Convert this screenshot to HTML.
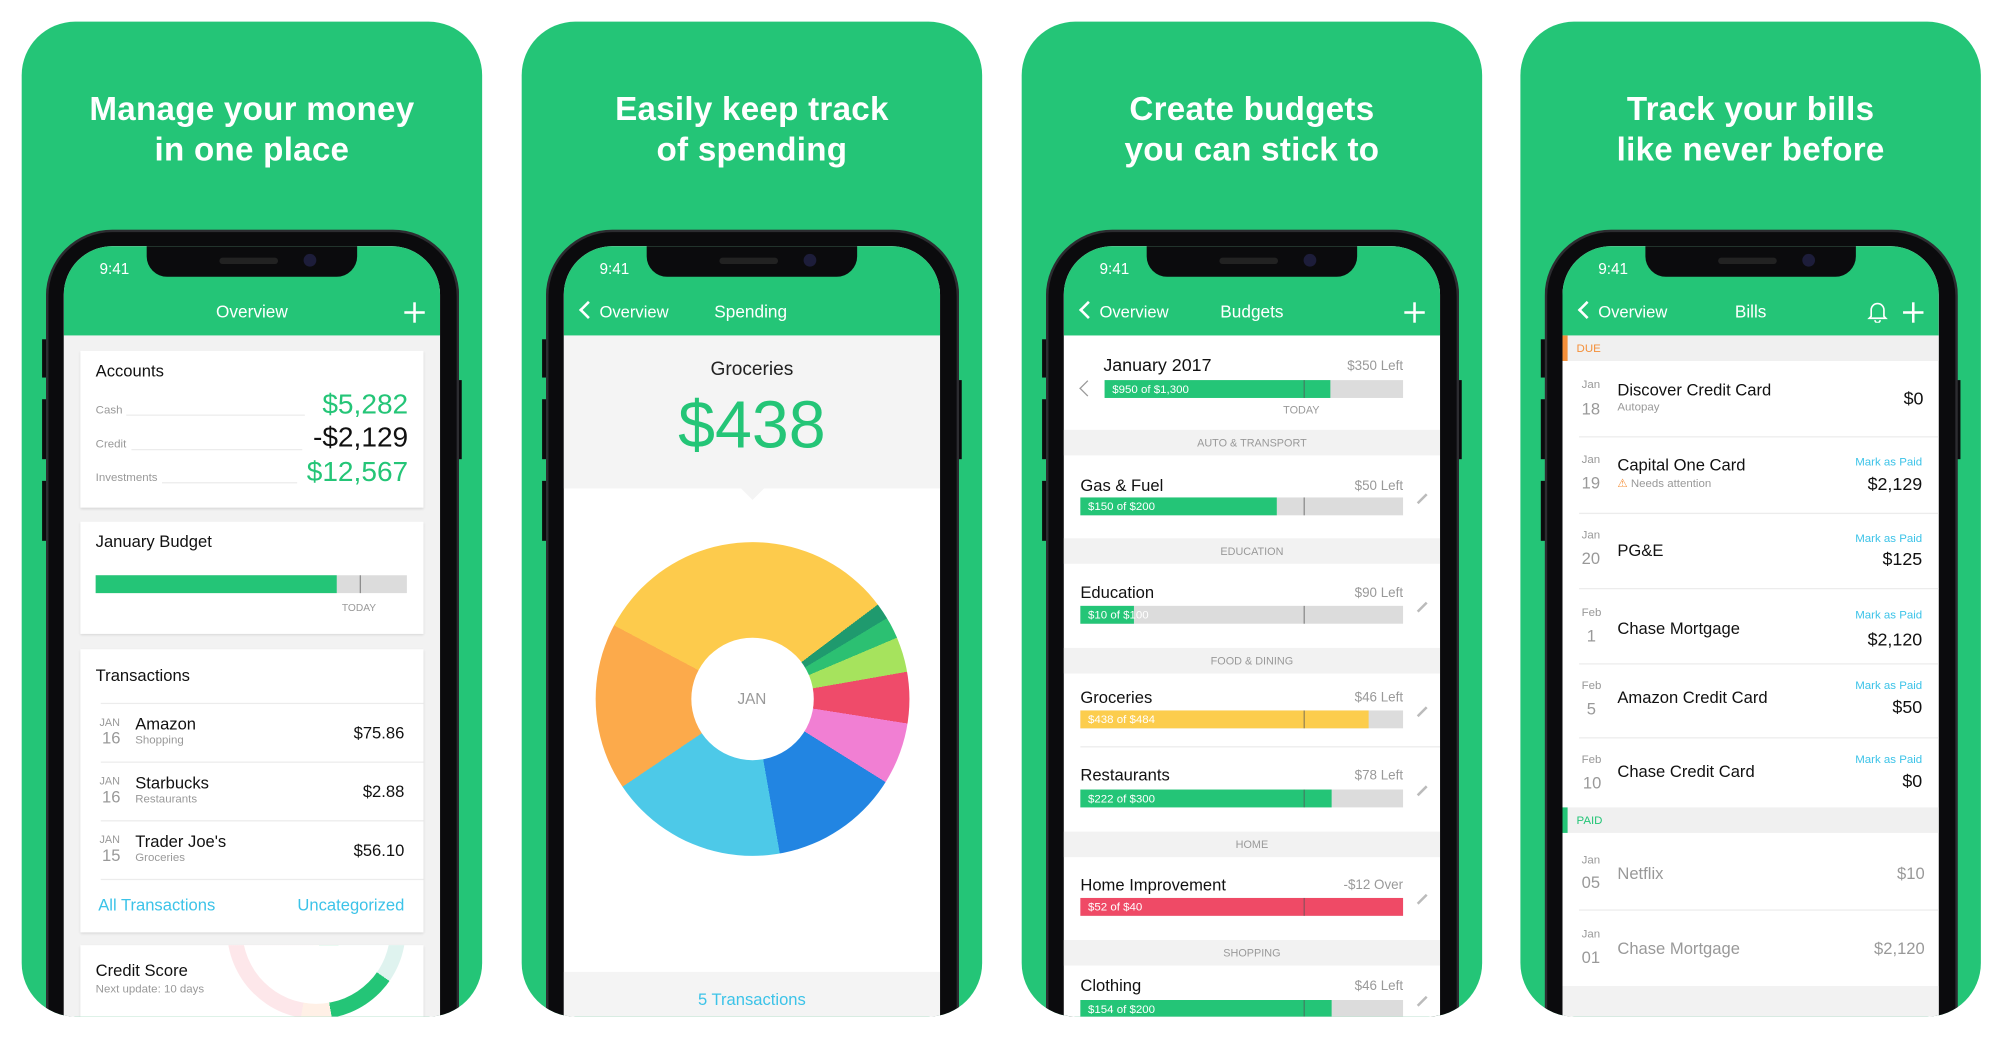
<!DOCTYPE html>
<html><head><meta charset="utf-8"><style>
*{margin:0;padding:0;box-sizing:border-box}
html,body{width:2000px;height:1038px;overflow:hidden;background:#fff;font-family:"Liberation Sans",sans-serif}
#root{position:absolute;left:0;top:0;width:1568px;height:814px;transform:scale(1.27551);transform-origin:0 0;overflow:hidden}
.p{position:absolute;top:17px;width:361px;height:780px;border-radius:42px;background:#24c577;overflow:hidden}
.ttl{position:absolute;left:0;right:0;top:52px;text-align:center;color:#fff;font-weight:bold;font-size:26px;line-height:32px;letter-spacing:.2px}
.ph{position:absolute;left:19px;top:163px;width:324px;height:617px;border-radius:52px 52px 0 0;background:#0b0b0d;border:2px solid #2c2c30;border-bottom:none;overflow:hidden}
.sc{position:absolute;left:12px;top:11px;width:295px;height:604px;border-radius:38px 38px 0 0;background:#fff;overflow:hidden}
.nt{position:absolute;left:65px;top:0;width:165px;height:24px;background:#0b0b0d;border-radius:0 0 16px 16px}
.nt i{position:absolute;left:57px;top:9px;width:46px;height:5px;border-radius:3px;background:#222}
.nt b{position:absolute;left:123px;top:6px;width:10px;height:10px;border-radius:50%;background:#1d1d3a}
.hd{position:absolute;left:0;top:0;width:295px;height:70px;background:#24c577}
.t{position:absolute;line-height:1;white-space:nowrap}
.tm{left:28px;top:12px;font-size:12px;color:#fff}
.htl{left:0;right:0;text-align:center;top:45px;font-size:13.5px;color:#fff}
.plus{position:absolute;left:267px;top:44px;width:16px;height:16px}
.plus:before{content:"";position:absolute;left:7px;top:0;width:2px;height:16px;background:#fff}
.plus:after{content:"";position:absolute;left:0;top:7px;width:16px;height:2px;background:#fff}
.chev{position:absolute;left:14px;top:45px;width:10px;height:10px;border-left:2px solid #fff;border-bottom:2px solid #fff;transform:rotate(45deg)}
.ov{left:28px;top:45px;font-size:13px;color:#fff}
.btn{position:absolute;background:#0b0b0d}
.card{position:absolute;left:13px;width:269px;background:#fff;box-shadow:0 1px 2px rgba(0,0,0,.12)}
.g{color:#24c577}.gr{color:#999}.bl{color:#3cc3e8}
.bar{position:absolute;height:14px;background:#dcdcdc}
.bar .f{position:absolute;left:0;top:0;bottom:0;background:#24c577}
.bar .k{position:absolute;top:0;bottom:0;width:1px;background:#555;opacity:.6}
.bar .x{position:absolute;left:6px;top:3px;font-size:9px;color:#fff;line-height:1;white-space:nowrap}
.sh{position:absolute;left:0;width:295px;height:20px;background:#f2f2f2;text-align:center;font-size:8.5px;color:#999;line-height:20px}
.pen{position:absolute;width:10px;height:2px;border:1px solid #bbb;transform:rotate(-45deg)}
.dv{position:absolute;height:1px;background:#ececec}
</style></head><body><div id="root">

<!-- PANEL 1 -->
<div class="p" style="left:17px">
<div class="ttl">Manage your money<br>in one place</div>
<div class="btn" style="left:16px;top:249px;width:5px;height:30px"></div>
<div class="btn" style="left:16px;top:296px;width:5px;height:47px"></div>
<div class="btn" style="left:16px;top:360px;width:5px;height:47px"></div>
<div class="btn" style="left:340px;top:281px;width:5px;height:62px"></div>
<div class="ph"><div class="sc">
 <div class="hd"></div>
 <div style="position:absolute;left:0;top:70px;width:295px;height:540px;background:#f2f2f2"></div>
 <div class="t tm">9:41</div>
 <div class="t htl">Overview</div>
 <div class="plus"></div>
 <div class="card" style="top:82px;height:123px">
  <div class="t" style="left:12px;top:9px;font-size:13px;color:#111">Accounts</div>
  <div class="t gr" style="left:12px;top:42px;font-size:9px">Cash</div>
  <div class="dv" style="left:36px;width:140px;top:50px"></div>
  <div class="t g" style="right:12px;top:31px;font-size:22px">$5,282</div>
  <div class="t gr" style="left:12px;top:69px;font-size:9px">Credit</div>
  <div class="dv" style="left:40px;width:134px;top:77px"></div>
  <div class="t" style="right:12px;top:57px;font-size:22px;color:#111">-$2,129</div>
  <div class="t gr" style="left:12px;top:95px;font-size:9px">Investments</div>
  <div class="dv" style="left:64px;width:106px;top:103px"></div>
  <div class="t g" style="right:12px;top:84px;font-size:22px">$12,567</div>
 </div>
 <div class="card" style="top:216px;height:88px">
  <div class="t" style="left:12px;top:9px;font-size:13px;color:#111">January Budget</div>
  <div class="bar" style="left:12px;top:42px;width:244px"><div class="f" style="width:189px"></div><div class="k" style="left:207px"></div></div>
  <div class="t gr" style="left:205px;top:64px;font-size:8px">TODAY</div>
 </div>
 <div class="card" style="top:316px;height:222px">
  <div class="t" style="left:12px;top:14px;font-size:13px;color:#111">Transactions</div>
  <div class="dv" style="left:16px;right:0;top:42px"></div>
  <div class="dv" style="left:16px;right:0;top:88px"></div>
  <div class="dv" style="left:16px;right:0;top:134px"></div>
  <div class="dv" style="left:16px;right:0;top:180px"></div>
  <div class="t gr" style="left:15px;top:53px;font-size:8.5px">JAN</div><div class="t gr" style="left:17px;top:63px;font-size:13px">16</div>
  <div class="t" style="left:43px;top:52px;font-size:13px;color:#111">Amazon</div><div class="t gr" style="left:43px;top:67px;font-size:9px">Shopping</div>
  <div class="t" style="right:15px;top:59px;font-size:13px;color:#111">$75.86</div>
  <div class="t gr" style="left:15px;top:99px;font-size:8.5px">JAN</div><div class="t gr" style="left:17px;top:109px;font-size:13px">16</div>
  <div class="t" style="left:43px;top:98px;font-size:13px;color:#111">Starbucks</div><div class="t gr" style="left:43px;top:113px;font-size:9px">Restaurants</div>
  <div class="t" style="right:15px;top:105px;font-size:13px;color:#111">$2.88</div>
  <div class="t gr" style="left:15px;top:145px;font-size:8.5px">JAN</div><div class="t gr" style="left:17px;top:155px;font-size:13px">15</div>
  <div class="t" style="left:43px;top:144px;font-size:13px;color:#111">Trader Joe's</div><div class="t gr" style="left:43px;top:159px;font-size:9px">Groceries</div>
  <div class="t" style="right:15px;top:151px;font-size:13px;color:#111">$56.10</div>
  <div class="t bl" style="left:14px;top:194px;font-size:13px">All Transactions</div>
  <div class="t bl" style="right:15px;top:194px;font-size:13px">Uncategorized</div>
 </div>
 <div class="card" style="top:548px;height:80px;overflow:hidden">
  <div style="position:absolute;left:115px;top:-82px;width:140px;height:140px;border-radius:50%;background:conic-gradient(#dff3ef 0deg 125deg,#24c577 125deg 170deg,#fff0e6 170deg 190deg,#fde7ea 190deg 360deg)"></div>
  <div style="position:absolute;left:127px;top:-70px;width:116px;height:116px;border-radius:50%;background:#fff"></div>
  <div class="t" style="left:12px;top:13px;font-size:13px;color:#111">Credit Score</div>
  <div class="t gr" style="left:12px;top:30px;font-size:9px">Next update: 10 days</div>
 </div>
 <div class="nt"><i></i><b></b></div>
</div></div>
</div>

<!-- PANEL 2 -->
<div class="p" style="left:409px">
<div class="ttl">Easily keep track<br>of spending</div>
<div class="btn" style="left:16px;top:249px;width:5px;height:30px"></div>
<div class="btn" style="left:16px;top:296px;width:5px;height:47px"></div>
<div class="btn" style="left:16px;top:360px;width:5px;height:47px"></div>
<div class="btn" style="left:340px;top:281px;width:5px;height:62px"></div>
<div class="ph"><div class="sc">
 <div class="hd"></div>
 <div class="t tm">9:41</div>
 <div class="chev"></div><div class="t ov">Overview</div>
 <div class="t" style="left:118px;top:45px;font-size:13.5px;color:#fff">Spending</div>
 <div style="position:absolute;left:0;top:70px;width:295px;height:120px;background:#f4f4f4"></div>
 <div style="position:absolute;left:139px;top:190px;width:0;height:0;border-left:9px solid transparent;border-right:9px solid transparent;border-top:9px solid #f4f4f4"></div>
 <div class="t" style="left:0;right:0;text-align:center;top:89px;font-size:15px;color:#222">Groceries</div>
 <div class="t g" style="left:0;right:0;text-align:center;top:115px;font-size:52px">$438</div>
 <div style="position:absolute;left:25px;top:232px;width:246px;height:246px;border-radius:50%;background:conic-gradient(#fdcb4c 0deg 53deg,#1f9a6e 53deg 59deg,#2cc072 59deg 67deg,#a6e35d 67deg 80deg,#ef4b6a 80deg 99deg,#f17fd3 99deg 122deg,#2285e2 122deg 170deg,#4dc9e8 170deg 236deg,#fcaa4b 236deg 298deg,#fdcb4c 298deg 360deg)"></div>
 <div style="position:absolute;left:100px;top:307px;width:96px;height:96px;border-radius:50%;background:#fff"></div>
 <div class="t gr" style="left:0;right:0;text-align:center;top:349px;font-size:12px">JAN</div>
 <div style="position:absolute;left:0;top:569px;width:295px;height:40px;background:#f4f4f4"></div>
 <div class="t bl" style="left:0;right:0;text-align:center;top:584px;font-size:13px">5 Transactions</div>
 <div class="nt"><i></i><b></b></div>
</div></div>
</div>

<!-- PANEL 3 -->
<div class="p" style="left:801px">
<div class="ttl">Create budgets<br>you can stick to</div>
<div class="btn" style="left:16px;top:249px;width:5px;height:30px"></div>
<div class="btn" style="left:16px;top:296px;width:5px;height:47px"></div>
<div class="btn" style="left:16px;top:360px;width:5px;height:47px"></div>
<div class="btn" style="left:340px;top:281px;width:5px;height:62px"></div>
<div class="ph"><div class="sc">
 <div class="hd"></div>
 <div class="t tm">9:41</div>
 <div class="chev"></div><div class="t ov">Overview</div>
 <div class="t htl">Budgets</div>
 <div class="plus"></div>
 <div class="t" style="left:31px;top:86px;font-size:14px;color:#111">January 2017</div>
 <div class="t gr" style="right:29px;top:89px;font-size:10.5px">$350 Left</div>
 <div style="position:absolute;left:14px;top:107px;width:9px;height:9px;border-left:1.5px solid #999;border-bottom:1.5px solid #999;transform:rotate(45deg)"></div>
 <div class="bar" style="left:32px;top:105px;width:234px"><div class="f" style="width:177px"></div><div class="k" style="left:156px"></div><div class="x">$950 of $1,300</div></div>
 <div class="t gr" style="left:172px;top:124px;font-size:8.5px">TODAY</div>
 <div class="sh" style="top:144px">AUTO &amp; TRANSPORT</div>
 <div class="sh" style="top:229px">EDUCATION</div>
 <div class="sh" style="top:315px">FOOD &amp; DINING</div>
 <div class="sh" style="top:459px">HOME</div>
 <div class="sh" style="top:544px">SHOPPING</div>
 <div class="dv" style="left:13px;right:0;top:392px"></div>

 <div class="t" style="left:13px;top:181px;font-size:13px;color:#111">Gas &amp; Fuel</div><div class="t gr" style="right:29px;top:183px;font-size:10.5px">$50 Left</div>
 <div class="bar" style="left:13px;top:197px;width:253px"><div class="f" style="width:154px"></div><div class="k" style="left:175px"></div><div class="x">$150 of $200</div></div>
 <div class="pen" style="left:276px;top:197px"></div>

 <div class="t" style="left:13px;top:265px;font-size:13px;color:#111">Education</div><div class="t gr" style="right:29px;top:267px;font-size:10.5px">$90 Left</div>
 <div class="bar" style="left:13px;top:282px;width:253px"><div class="f" style="width:42px"></div><div class="k" style="left:175px"></div><div class="x">$10 of $100</div></div>
 <div class="pen" style="left:276px;top:282px"></div>

 <div class="t" style="left:13px;top:347px;font-size:13px;color:#111">Groceries</div><div class="t gr" style="right:29px;top:349px;font-size:10.5px">$46 Left</div>
 <div class="bar" style="left:13px;top:364px;width:253px"><div class="f" style="width:226px;background:#fccd4d"></div><div class="k" style="left:175px"></div><div class="x">$438 of $484</div></div>
 <div class="pen" style="left:276px;top:364px"></div>

 <div class="t" style="left:13px;top:408px;font-size:13px;color:#111">Restaurants</div><div class="t gr" style="right:29px;top:410px;font-size:10.5px">$78 Left</div>
 <div class="bar" style="left:13px;top:426px;width:253px"><div class="f" style="width:197px"></div><div class="k" style="left:175px"></div><div class="x">$222 of $300</div></div>
 <div class="pen" style="left:276px;top:426px"></div>

 <div class="t" style="left:13px;top:494px;font-size:13px;color:#111">Home Improvement</div><div class="t gr" style="right:29px;top:496px;font-size:10.5px">-$12 Over</div>
 <div class="bar" style="left:13px;top:511px;width:253px"><div class="f" style="width:253px;background:#ef4a66"></div><div class="k" style="left:175px"></div><div class="x">$52 of $40</div></div>
 <div class="pen" style="left:276px;top:511px"></div>

 <div class="t" style="left:13px;top:573px;font-size:13px;color:#111">Clothing</div><div class="t gr" style="right:29px;top:575px;font-size:10.5px">$46 Left</div>
 <div class="bar" style="left:13px;top:591px;width:253px"><div class="f" style="width:197px"></div><div class="k" style="left:175px"></div><div class="x">$154 of $200</div></div>
 <div class="pen" style="left:276px;top:591px"></div>
 <div class="nt"><i></i><b></b></div>
</div></div>
</div>

<!-- PANEL 4 -->
<div class="p" style="left:1192px">
<div class="ttl">Track your bills<br>like never before</div>
<div class="btn" style="left:16px;top:249px;width:5px;height:30px"></div>
<div class="btn" style="left:16px;top:296px;width:5px;height:47px"></div>
<div class="btn" style="left:16px;top:360px;width:5px;height:47px"></div>
<div class="btn" style="left:340px;top:281px;width:5px;height:62px"></div>
<div class="ph"><div class="sc">
 <div class="hd"></div>
 <div class="t tm">9:41</div>
 <div class="chev"></div><div class="t ov">Overview</div>
 <div class="t htl">Bills</div>
 <svg style="position:absolute;left:239px;top:43px" width="16" height="17" viewBox="0 0 16 17"><path d="M3 12 V7 a5 5 0 0 1 10 0 V12 L14.5 13.5 H1.5 Z M6 15 a2 2 0 0 0 4 0" fill="none" stroke="#fff" stroke-width="1.3"/></svg>
 <div class="plus"></div>
 <div style="position:absolute;left:0;top:70px;width:295px;height:20px;background:#f0f0f0"></div>
 <div style="position:absolute;left:0;top:70px;width:4px;height:20px;background:#f5903a"></div>
 <div class="t" style="left:11px;top:76px;font-size:9px;color:#f5903a">DUE</div>

 <div class="t gr" style="left:15px;top:104px;font-size:9px">Jan</div><div class="t gr" style="left:15px;top:121px;font-size:13px">18</div>
 <div class="t" style="left:43px;top:106px;font-size:13px;color:#111">Discover Credit Card</div><div class="t gr" style="left:43px;top:122px;font-size:9px">Autopay</div>
 <div class="t" style="right:12px;top:112px;font-size:14px;color:#111">$0</div>
 <div class="dv" style="left:13px;right:0;top:149px"></div>

 <div class="t gr" style="left:15px;top:163px;font-size:9px">Jan</div><div class="t gr" style="left:15px;top:179px;font-size:13px">19</div>
 <div class="t" style="left:43px;top:165px;font-size:13px;color:#111">Capital One Card</div><div class="t gr" style="left:43px;top:182px;font-size:9px"><span style="color:#f5903a">⚠</span> Needs attention</div>
 <div class="t bl" style="right:13px;top:165px;font-size:9px">Mark as Paid</div><div class="t" style="right:13px;top:179px;font-size:14px;color:#111">$2,129</div>
 <div class="dv" style="left:13px;right:0;top:209px"></div>

 <div class="t gr" style="left:15px;top:222px;font-size:9px">Jan</div><div class="t gr" style="left:15px;top:238px;font-size:13px">20</div>
 <div class="t" style="left:43px;top:232px;font-size:13px;color:#111">PG&amp;E</div>
 <div class="t bl" style="right:13px;top:225px;font-size:9px">Mark as Paid</div><div class="t" style="right:13px;top:238px;font-size:14px;color:#111">$125</div>
 <div class="dv" style="left:13px;right:0;top:268px"></div>

 <div class="t gr" style="left:15px;top:283px;font-size:9px">Feb</div><div class="t gr" style="left:19px;top:299px;font-size:13px">1</div>
 <div class="t" style="left:43px;top:293px;font-size:13px;color:#111">Chase Mortgage</div>
 <div class="t bl" style="right:13px;top:285px;font-size:9px">Mark as Paid</div><div class="t" style="right:13px;top:301px;font-size:14px;color:#111">$2,120</div>
 <div class="dv" style="left:13px;right:0;top:327px"></div>

 <div class="t gr" style="left:15px;top:340px;font-size:9px">Feb</div><div class="t gr" style="left:19px;top:356px;font-size:13px">5</div>
 <div class="t" style="left:43px;top:347px;font-size:13px;color:#111">Amazon Credit Card</div>
 <div class="t bl" style="right:13px;top:340px;font-size:9px">Mark as Paid</div><div class="t" style="right:13px;top:354px;font-size:14px;color:#111">$50</div>
 <div class="dv" style="left:13px;right:0;top:385px"></div>

 <div class="t gr" style="left:15px;top:398px;font-size:9px">Feb</div><div class="t gr" style="left:16px;top:414px;font-size:13px">10</div>
 <div class="t" style="left:43px;top:405px;font-size:13px;color:#111">Chase Credit Card</div>
 <div class="t bl" style="right:13px;top:398px;font-size:9px">Mark as Paid</div><div class="t" style="right:13px;top:412px;font-size:14px;color:#111">$0</div>

 <div style="position:absolute;left:0;top:440px;width:295px;height:20px;background:#f0f0f0"></div>
 <div style="position:absolute;left:0;top:440px;width:4px;height:20px;background:#24c577"></div>
 <div class="t g" style="left:11px;top:446px;font-size:9px">PAID</div>

 <div class="t gr" style="left:15px;top:477px;font-size:9px">Jan</div><div class="t gr" style="left:15px;top:492px;font-size:13px">05</div>
 <div class="t gr" style="left:43px;top:485px;font-size:13px">Netflix</div>
 <div class="t gr" style="right:11px;top:485px;font-size:13px">$10</div>
 <div class="dv" style="left:13px;right:0;top:520px"></div>
 <div class="t gr" style="left:15px;top:535px;font-size:9px">Jan</div><div class="t gr" style="left:15px;top:551px;font-size:13px">01</div>
 <div class="t gr" style="left:43px;top:544px;font-size:13px">Chase Mortgage</div>
 <div class="t gr" style="right:11px;top:544px;font-size:13px">$2,120</div>
 <div style="position:absolute;left:0;top:580px;width:295px;height:30px;background:#f2f2f2"></div>
 <div class="nt"><i></i><b></b></div>
</div></div>
</div>

</div></body></html>
